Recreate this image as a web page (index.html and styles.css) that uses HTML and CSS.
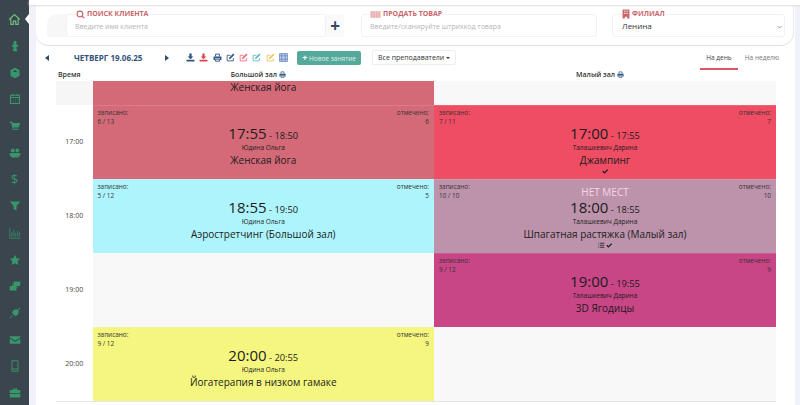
FILE: index.html
```html
<!DOCTYPE html>
<html lang="ru">
<head>
  <meta charset="UTF-8">
  <title>Расписание</title>
  <link rel="stylesheet" href="styles.css">
</head>
<body>
  <svg class="sprite" width="0" height="0">
    <symbol id="i-print" viewBox="0 0 16 16"><path fill="none" stroke="currentColor" stroke-width="1.600" d="M4.500 6V2h7v4M4.500 11h7v3.500h-7z"/><path fill="currentColor" d="M1 6h14v6.500h-2.500V9.500h-9v3H1z"/></symbol>
    <symbol id="i-down" viewBox="0 0 16 16"><path fill="currentColor" d="M6 1h4v5h3l-5 5-5-5h3zM1 12h14v3H1z"/></symbol>
    <symbol id="i-edit" viewBox="0 0 16 16"><path fill="none" stroke="currentColor" stroke-width="1.500" d="M13 9v5H2V4h6"/><path fill="currentColor" d="M13 1l2 2-7 7-3 1 1-3z"/></symbol>
    <symbol id="i-check" viewBox="0 0 16 16"><path fill="none" stroke="currentColor" stroke-width="3" d="M2 8l4 4 8-8"/></symbol>
    <symbol id="i-list" viewBox="0 0 16 16"><path fill="none" stroke="currentColor" stroke-width="2" d="M5 3h11M5 8h11M5 13h11M1 3h2M1 8h2M1 13h2"/></symbol>
  </svg>

  <nav class="sidebar">
    <div class="side-item side-active">
      <svg viewBox="0 0 16 16"><path fill="none" stroke="#6fbf7f" stroke-width="1.400" d="M1.500 8L8 2l6.500 6M3.500 7v7h3v-4h3v4h3V7"/></svg>
    </div>
    <div class="side-item"><svg viewBox="0 0 16 16"><path fill="#37966a" d="M8 1a2 2 0 012 2v3l2 1v2h-2v2l1 4H5l1-4V9H4V7l2-1V3a2 2 0 012-2z"/></svg></div>
    <div class="side-item"><svg viewBox="0 0 16 16"><path fill="#37966a" d="M8 1l6 3v8l-6 3-6-3V4zM8 7l3-1.500-3-1.500-3 1.500z"/></svg></div>
    <div class="side-item"><svg viewBox="0 0 16 16"><path fill="none" stroke="#37966a" stroke-width="1.500" d="M2 3h12v11H2zM2 6h12M5 1v3M11 1v3M5 9h1M8 9h1M11 9h1M5 12h1M8 12h1M11 12h1"/></svg></div>
    <div class="side-item"><svg viewBox="0 0 16 16"><path fill="#37966a" d="M1 2h3l1 2h10l-2 6H5.500l.5 1.500h7V13H5L3 3.500H1z"/></svg></div>
    <div class="side-item"><svg viewBox="0 0 16 16"><path fill="#37966a" d="M5 2a2.500 2.500 0 110 5 2.500 2.500 0 010-5zm6 0a2.500 2.500 0 110 5 2.500 2.500 0 010-5zM1 8h14v4h-2v2H3v-2H1z"/></svg></div>
    <div class="side-item side-text">$</div>
    <div class="side-item"><svg viewBox="0 0 16 16"><path fill="#37966a" d="M1 2h14l-5 6v6l-4-2V8z"/></svg></div>
    <div class="side-item"><svg viewBox="0 0 16 16"><path fill="none" stroke="#37966a" stroke-width="1" d="M1 1v14h14M4 13V7M6.500 13V4M9 13V8M11.500 13V5M14 13V7"/></svg></div>
    <div class="side-item"><svg viewBox="0 0 16 16"><path fill="#37966a" d="M8 1l2.200 4.500 4.800.7-3.500 3.400.8 4.900L8 12.200l-4.300 2.300.8-4.900L1 6.200l4.800-.7z"/></svg></div>
    <div class="side-item"><svg viewBox="0 0 16 16"><path fill="#37966a" d="M6 2h9v6H6zM4 5h1v4h7v1H4zM1 8h9v6H1z"/></svg></div>
    <div class="side-item"><svg viewBox="0 0 16 16"><path fill="#37966a" d="M14 1l1 1-3 3 1 1-1 4-4 2-2-2-4 5-1-1 5-4-2-2 2-4 4-1 1 1z"/></svg></div>
    <div class="side-item"><svg viewBox="0 0 16 16"><path fill="#37966a" d="M1 3h14v1.500L8 9 1 4.500zM1 6l7 4.500L15 6v7H1z"/></svg></div>
    <div class="side-item"><svg viewBox="0 0 16 16"><path fill="none" stroke="#37966a" stroke-width="1.300" d="M4 1h8v14H4zM4 12h8"/></svg></div>
    <div class="side-item"><svg viewBox="0 0 16 16"><path fill="#37966a" d="M5 2h6v2h4v4H1V4h4zM6.500 3.500V4h3v-.5zM1 9h14v5H1z"/></svg></div>
  </nav>

  <div class="content">
    <div class="topbar"></div>
    <main class="page">
      <header class="top-card">
        <section class="field field-client">
          <label class="field-label"><svg class="label-icon" viewBox="0 0 16 16"><path fill="none" stroke="currentColor" stroke-width="2" d="M7 2a5 5 0 110 10A5 5 0 017 2zM10.500 10.500L15 15"/></svg>ПОИСК КЛИЕНТА</label>
          <div class="client-row">
            <div class="field-box">Введите имя клиента</div>
            <button class="plus-btn">+</button>
          </div>
        </section>
        <section class="field field-goods">
          <label class="field-label"><svg class="label-icon barcode" viewBox="0 0 20 16"><path fill="#e7a5a5" d="M1 2h18v12H1z"/><path stroke="#fff" stroke-width=".7" d="M4 2v12M7 2v12M10 2v12M13 2v12M16 2v12"/></svg>ПРОДАТЬ ТОВАР</label>
          <div class="field-box">Введите/сканируйте штрихкод товара</div>
        </section>
        <section class="field field-branch">
          <label class="field-label"><svg class="label-icon branch-icon" viewBox="0 0 14 16"><path fill="currentColor" d="M1 0h12v16H9v-3H5v3H1zM4 2v2h2V2zm4 0v2h2V2zM4 6v2h2V6zm4 0v2h2V6z"/></svg>ФИЛИАЛ</label>
          <div class="field-box branch-box">Ленина<svg class="chev" viewBox="0 0 10 6"><path fill="none" stroke="#555" stroke-width="1.200" d="M1 1l4 4 4-4"/></svg></div>
        </section>
      </header>

      <div class="toolbar">
        <span class="arrow arrow-left"></span>
        <strong class="date">ЧЕТВЕРГ 19.06.25</strong>
        <span class="arrow arrow-right"></span>
        <div class="tool-icons">
          <svg class="c-navy"><use href="#i-down"/></svg>
          <svg class="c-red"><use href="#i-down"/></svg>
          <svg class="c-navy"><use href="#i-print"/></svg>
          <svg class="c-navy"><use href="#i-edit"/></svg>
          <svg class="c-pink"><use href="#i-edit"/></svg>
          <svg class="c-teal"><use href="#i-edit"/></svg>
          <svg class="c-yellow"><use href="#i-edit"/></svg>
          <svg class="c-blue" viewBox="0 0 16 16"><path fill="#c5d3ec" d="M1 1h14v14H1z"/><path fill="none" stroke="currentColor" stroke-width="1.200" d="M1 1h14v14H1zM5 1v14M11 1v14M1 5h14M1 11h14"/></svg>
        </div>
        <button class="new-btn"><b>+</b> Новое занятие</button>
        <button class="teacher-btn">Все преподаватели <span class="caret"></span></button>
        <div class="tabs">
          <span class="tab tab-on">На день</span>
          <span class="tab">На неделю</span>
        </div>
      </div>

      <div class="schedule">
        <div class="head head-time">Время</div>
        <div class="head">Большой зал <svg class="head-print"><use href="#i-print"/></svg></div>
        <div class="head">Малый зал <svg class="head-print"><use href="#i-print"/></svg></div>

        <div class="time time-empty"></div>
        <div class="cell cell-cut rose"><div class="title">Женская йога</div></div>
        <div class="cell cell-empty"></div>

        <div class="time">17:00</div>
        <div class="cell rose">
          <div class="counts"><span>записано:<br>6 / 13</span><span class="right">отмечено:<br>6</span></div>
          <div class="hours"><span class="from">17:55</span> - 18:50</div>
          <div class="teacher">Юдина Ольга</div>
          <div class="title">Женская йога</div>
        </div>
        <div class="cell red">
          <div class="counts"><span>записано:<br>7 / 11</span><span class="right">отмечено:<br>7</span></div>
          <div class="hours"><span class="from">17:00</span> - 17:55</div>
          <div class="teacher">Талашкевич Дарина</div>
          <div class="title">Джампинг</div>
          <div class="marks"><svg><use href="#i-check"/></svg></div>
        </div>

        <div class="time">18:00</div>
        <div class="cell sky">
          <div class="counts"><span>записано:<br>5 / 12</span><span class="right">отмечено:<br>5</span></div>
          <div class="hours"><span class="from">18:55</span> - 19:50</div>
          <div class="teacher">Юдина Ольга</div>
          <div class="title">Аэростретчинг (Большой зал)</div>
        </div>
        <div class="cell mauve">
          <div class="no-seats">НЕТ МЕСТ</div>
          <div class="counts"><span>записано:<br>10 / 10</span><span class="right">отмечено:<br>10</span></div>
          <div class="hours"><span class="from">18:00</span> - 18:55</div>
          <div class="teacher">Талашкевич Дарина</div>
          <div class="title">Шпагатная растяжка (Малый зал)</div>
          <div class="marks"><svg><use href="#i-list"/></svg><svg><use href="#i-check"/></svg></div>
        </div>

        <div class="time">19:00</div>
        <div class="cell cell-empty"></div>
        <div class="cell berry">
          <div class="counts"><span>записано:<br>9 / 12</span><span class="right">отмечено:<br>9</span></div>
          <div class="hours"><span class="from">19:00</span> - 19:55</div>
          <div class="teacher">Талашкевич Дарина</div>
          <div class="title">3D Ягодицы</div>
        </div>

        <div class="time">20:00</div>
        <div class="cell lemon">
          <div class="counts"><span>записано:<br>9 / 12</span><span class="right">отмечено:<br>9</span></div>
          <div class="hours"><span class="from">20:00</span> - 20:55</div>
          <div class="teacher">Юдина Ольга</div>
          <div class="title">Йогатерапия в низком гамаке</div>
        </div>
        <div class="cell cell-empty"></div>
      </div>
    </main>
  </div>
</body>
</html>
```

FILE: styles.css
```css
* {
  box-sizing: border-box;
}

html, body {
  margin: 0;
  height: 405px;
  overflow: hidden;
}

body {
  display: flex;
  background: #f1f1f9;
  color: #2b2b2b;
  font-family: "Open Sans", "Noto Sans", sans-serif;
  font-size: 8px;
}

.sprite {
  position: absolute;
}

/* sidebar */
.sidebar {
  width: 29px;
  flex: none;
  height: 405px;
  background: #3a454e;
  display: flex;
  flex-direction: column;
  padding-top: 6px;
}

.side-item {
  height: 26.700px;
  flex: none;
  display: flex;
  align-items: center;
  justify-content: center;
  color: #37966a;
}

.side-item svg {
  width: 12px;
  height: 12px;
}

.side-active {
  position: relative;
}

.side-active svg {
  width: 13px;
  height: 13px;
}

.side-active::after {
  content: "";
  position: absolute;
  right: 0;
  top: 8px;
  border: 5px solid transparent;
  border-right: 4px solid #fff;
  border-left: 0;
}

.side-text {
  font-size: 13px;
}

/* page */
.content {
  flex: 1;
  min-width: 0;
}

.topbar {
  position: relative;
  height: 5px;
  background: #fff;
  box-shadow: 0 1px 2px #dcdce4;
}

.page {
  margin: 0 5px 0 7px;
  height: 400px;
  background: #fff;
}

.top-card {
  height: 40px;
  padding: 9px 0 0 11px;
  width: 757px;
  background: #fff;
  border-radius: 0 0 12px 12px;
  display: flex;
  box-shadow: 0 1px 0 #e0e0e6, 1px 0 0 #e8e8ee, -1px 0 0 #f2f2f5;
}

.field {
  position: relative;
}

.field-label {
  position: absolute;
  left: 9px;
  top: -5px;
  display: flex;
  align-items: center;
  gap: 2px;
  color: #c9646a;
  background: #fff;
  font-size: 7px;
  font-weight: 700;
  line-height: 10px;
  white-space: nowrap;
  z-index: 1;
}

.label-icon {
  width: 9px;
  height: 9px;
}

.barcode {
  width: 11px;
}

.branch-icon {
  width: 8px;
  height: 10px;
}

.field-box {
  height: 23px;
  padding: 7px 0 0 8px;
  border: 1px solid #f2f2f4;
  border-radius: 3px;
  color: #b5b5b5;
  font-size: 7px;
  line-height: 10px;
  background: #fff;
  white-space: nowrap;
}

.field-client {
  width: 297px;
  padding-left: 19px;
  background: linear-gradient(#f7f7f7, #f7f7f7) no-repeat 0 0 / 22px 23px;
  border-radius: 10px 0 0 10px;
}

.field-client .field-label {
  left: 29px;
}

.client-row {
  display: flex;
}

.client-row .field-box {
  flex: 1;
}

.plus-btn {
  width: 18px;
  height: 23px;
  padding: 0;
  border: 0;
  background: #fafafa;
  color: #34496b;
  font: 700 17px/22px "Open Sans", sans-serif;
}

.field-goods {
  width: 236px;
  margin-left: 17px;
}

.field-branch {
  width: 173px;
  margin-left: 15px;
}

.field-branch .field-label {
  left: 10px;
}

.branch-box {
  color: #333;
  font-size: 8px;
  padding: 6px 2px 0 9px;
  display: flex;
  justify-content: space-between;
}

.chev {
  width: 5px;
  height: 4px;
  margin-top: 4px;
}

/* toolbar */
.toolbar {
  height: 25px;
  display: flex;
  align-items: center;
  padding-left: 9px;
}

.arrow {
  border: 3.500px solid transparent;
}

.arrow-left {
  border-right: 4px solid #2d4d73;
  border-left: 0;
}

.arrow-right {
  border-left: 4px solid #2d4d73;
  border-right: 0;
}

.date {
  width: 68px;
  color: #34527c;
  font-size: 8px;
  margin: 0 23px 0 25px;
  white-space: nowrap;
}

.tool-icons {
  display: flex;
  gap: 4.300px;
  margin-left: 17px;
}

.tool-icons svg {
  width: 9px;
  height: 9px;
}

.c-navy { color: #2d5380; }
.c-red { color: #dc4452; }
.c-pink { color: #ee6a78; }
.c-teal { color: #5cb9bc; }
.c-yellow { color: #ecc35c; }
.c-blue { color: #5577bb; }

.new-btn {
  width: 64px;
  height: 14px;
  margin-left: 9px;
  padding: 0;
  border: 0;
  border-radius: 2px;
  background: #55a99b;
  color: #dff0ec;
  font: 6.500px/14px "Open Sans", sans-serif;
  white-space: nowrap;
}

.new-btn b {
  font-size: 9px;
  color: #fff;
}

.teacher-btn {
  width: 84px;
  height: 15px;
  margin-left: 11px;
  padding: 0;
  border: 1px solid #eee;
  border-radius: 2px;
  background: #fff;
  color: #333;
  font: 7px/13px "Open Sans", sans-serif;
  white-space: nowrap;
}

.caret {
  display: inline-block;
  border: 2px solid transparent;
  border-top: 2px solid #333;
  border-bottom: 0;
  vertical-align: middle;
}

.tabs {
  margin-left: auto;
  margin-right: 14px;
  height: 25px;
  display: flex;
  gap: 5px;
}

.tab {
  width: 38px;
  height: 25px;
  text-align: center;
  line-height: 26px;
  font-size: 6.500px;
  color: #777;
  white-space: nowrap;
}

.tab-on {
  color: #444;
  border-bottom: 2px solid #dc5766;
}

/* schedule */
.schedule {
  margin: 1px 0 0 20px;
  width: 720px;
  display: grid;
  grid-template-columns: 36.500px 341.500px 342px;
  grid-template-rows: 10px 23.500px repeat(4, 74px);
  border-bottom: 1px solid #e5e5e5;
}

.head {
  padding-right: 10px;
  text-align: center;
  font-size: 7px;
  font-weight: 600;
  line-height: 8px;
  color: #333;
  white-space: nowrap;
}

.head-time {
  text-align: left;
  padding: 0 0 0 2px;
}

.head-print {
  width: 7px;
  height: 7px;
  color: #2d5380;
  vertical-align: -1px;
}

.time {
  display: flex;
  align-items: center;
  justify-content: center;
  font-size: 7px;
  color: #444;
}

.time-empty {
  background: #f6f6f6;
}

.cell {
  position: relative;
  padding: 3px 5px 0;
  text-align: center;
  color: #1c1c1c;
  overflow: hidden;
  box-shadow: inset 0 1px 0 rgba(255, 255, 255, .12);
}

.cell-empty {
  background: #f8f8f8;
  box-shadow: none;
}

.cell-cut {
  padding-top: .5px;
  box-shadow: none;
  overflow: visible;
}

.cell-cut .title {
  margin-top: 0;
  line-height: 10px;
}

.rose { background: #d46a78; }
.red { background: #ee4d63; }
.sky { background: #aef4fd; }
.mauve { background: #bd93ab; }
.berry { background: #c84586; }
.lemon { background: #f4f67f; }

.counts {
  display: flex;
  justify-content: space-between;
  text-align: left;
  font-size: 6.400px;
  line-height: 9px;
  color: #333;
  height: 16.500px;
}

.right {
  text-align: right;
}

.hours {
  font-size: 9.300px;
  line-height: 18px;
  height: 18px;
}

.from {
  font-size: 15px;
}

.teacher {
  font-size: 6.500px;
  line-height: 8px;
  margin-top: 1.500px;
}

.title {
  font-size: 10px;
  line-height: 14px;
  margin-top: 1px;
}

.marks {
  display: flex;
  justify-content: center;
  gap: 1px;
  height: 8px;
  margin-top: 1.500px;
}

.marks svg {
  width: 6.500px;
  height: 6.500px;
}

.no-seats {
  position: absolute;
  left: 0;
  right: 0;
  top: 8px;
  font-size: 10px;
  line-height: 10px;
  color: #f3d6e6;
}
```
